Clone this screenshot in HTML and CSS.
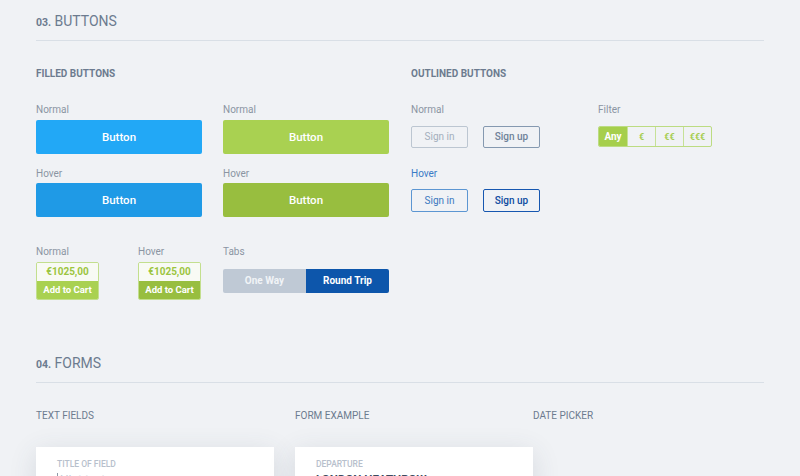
FILE: index.html
```html
<!DOCTYPE html>
<html lang="en">
<head>
  <meta charset="UTF-8" />
  <meta name="viewport" content="width=device-width, initial-scale=1.0"/>
  <title>UI Kit - Buttons &amp; Forms</title>
  <link rel="stylesheet" href="styles.css">
</head>
<body>
  <section class="section">
    <h2 class="section-title"><span class="section-num">03.</span> BUTTONS</h2>

    <div class="button-groups">
      <div class="group group-filled">
        <h3 class="group-title">Filled buttons</h3>
        <div class="demo-grid">
          <div class="demo">
            <span class="demo-label">Normal</span>
            <div class="demo-body"><button class="btn btn-blue">Button</button></div>
          </div>
          <div class="demo">
            <span class="demo-label">Normal</span>
            <div class="demo-body"><button class="btn btn-green">Button</button></div>
          </div>
          <div class="demo">
            <span class="demo-label">Hover</span>
            <div class="demo-body"><button class="btn btn-blue is-hover">Button</button></div>
          </div>
          <div class="demo">
            <span class="demo-label">Hover</span>
            <div class="demo-body"><button class="btn btn-green is-hover">Button</button></div>
          </div>

          <div class="demo-pair demo-last">
            <div class="demo">
              <span class="demo-label">Normal</span>
              <div class="demo-body tall">
                <div class="cart">
                  <span class="cart-price">€1025,00</span>
                  <button class="cart-btn">Add to Cart</button>
                </div>
              </div>
            </div>
            <div class="demo">
              <span class="demo-label">Hover</span>
              <div class="demo-body tall">
                <div class="cart is-hover">
                  <span class="cart-price">€1025,00</span>
                  <button class="cart-btn">Add to Cart</button>
                </div>
              </div>
            </div>
          </div>
          <div class="demo demo-last">
            <span class="demo-label">Tabs</span>
            <div class="demo-body tall">
              <div class="tabs">
                <button class="tab">One Way</button>
                <button class="tab active">Round Trip</button>
              </div>
            </div>
          </div>
        </div>
      </div>

      <div class="group group-outlined">
        <h3 class="group-title">Outlined buttons</h3>
        <div class="demo-grid">
          <div class="demo">
            <span class="demo-label">Normal</span>
            <div class="demo-body">
              <button class="btn-line">Sign in</button>
              <button class="btn-line strong">Sign up</button>
            </div>
          </div>
          <div class="demo">
            <span class="demo-label">Filter</span>
            <div class="demo-body">
              <div class="filter">
                <button class="filter-opt active">Any</button>
                <button class="filter-opt">€</button>
                <button class="filter-opt">€€</button>
                <button class="filter-opt">€€€</button>
              </div>
            </div>
          </div>
          <div class="demo">
            <span class="demo-label hover-label">Hover</span>
            <div class="demo-body">
              <button class="btn-line is-hover">Sign in</button>
              <button class="btn-line strong is-hover">Sign up</button>
            </div>
          </div>
        </div>
      </div>
    </div>
  </section>

  <section class="section section-forms">
    <h2 class="section-title"><span class="section-num">04.</span> FORMS</h2>

    <div class="form-cols">
      <div class="form-col">
        <h3 class="col-title">Text fields</h3>
        <div class="card">
          <span class="field-label">Title of field</span>
          <div class="field-input"><span class="caret"></span>Hint text</div>
        </div>
      </div>
      <div class="form-col">
        <h3 class="col-title">Form example</h3>
        <div class="card">
          <span class="field-label">Departure</span>
          <div class="field-value">LONDON HEATHROW</div>
        </div>
      </div>
      <div class="form-col">
        <h3 class="col-title">Date picker</h3>
      </div>
    </div>
  </section>
</body>
</html>
```

FILE: styles.css
```css
:root {
  --page-bg: #f0f2f5;
  --title: #6c7b8f;
  --label: #8b95a3;
  --rule: #d9dfe6;
  --blue: #22a8f6;
  --blue-hover: #1f9ae6;
  --green: #a9d151;
  --green-hover: #98be3f;
  --navy: #0d56ab;
}

* {
  margin: 0;
  padding: 0;
  box-sizing: border-box;
  font-family: 'Roboto', 'Liberation Sans', sans-serif;
}

html, body {
  overflow: hidden;
}

body {
  background-color: var(--page-bg);
  color: var(--title);
  padding: 0 36px;
  width: 800px;
  height: 476px;
}

button {
  border: none;
  background: none;
  cursor: pointer;
  font-family: inherit;
}

/* section headings */
.section {
  padding-top: 11px;
}

.section-title {
  font-size: 14px;
  font-weight: 400;
  line-height: 20px;
  color: var(--title);
  padding-bottom: 7px;
  border-bottom: 1px solid var(--rule);
}

.section-num {
  font-size: 10.5px;
  font-weight: 700;
}

.section-forms {
  margin-top: 42px;
}

/* button groups */
.button-groups {
  display: flex;
  gap: 22px;
}

.group-filled {
  width: 353px;
}

.group-title {
  margin-top: 26px;
  font-size: 10px;
  line-height: 14px;
  font-weight: 700;
  text-transform: uppercase;
  color: var(--title);
}

.demo-grid {
  display: grid;
  grid-template-columns: 166px 166px;
  column-gap: 21px;
  row-gap: 13px;
  margin-top: 22px;
}

.demo-label {
  display: block;
  font-size: 10px;
  line-height: 14px;
  color: var(--label);
  margin-bottom: 2.5px;
}

.hover-label {
  color: #3a7bc6;
}

.demo-body {
  height: 34px;
  display: flex;
  align-items: center;
  gap: 15px;
}

.demo-body.tall {
  height: 38px;
}

.demo-last {
  margin-top: 15px;
}

.demo-pair {
  display: flex;
  gap: 39px;
}

/* filled buttons */
.btn {
  width: 100%;
  height: 34px;
  border-radius: 2px;
  color: #fff;
  font-size: 11.5px;
  font-weight: 500;
}

.btn-blue { background: var(--blue); }
.btn-blue.is-hover { background: var(--blue-hover); }
.btn-green { background: var(--green); }
.btn-green.is-hover { background: var(--green-hover); }

/* add to cart */
.cart {
  width: 63px;
  height: 38px;
  display: flex;
  flex-direction: column;
  border: 1px solid #c3df8e;
  border-radius: 2px;
  overflow: hidden;
}

.cart-price {
  flex: 1;
  background: #f8faf4;
  color: #9cc540;
  font-size: 10px;
  font-weight: 700;
  line-height: 18px;
  text-align: center;
}

.cart-btn {
  height: 19px;
  background: var(--green);
  color: #fff;
  font-size: 9.5px;
  font-weight: 700;
}

.cart.is-hover .cart-btn {
  background: var(--green-hover);
}

/* tabs */
.tabs {
  display: flex;
  width: 166px;
  height: 24px;
  border-radius: 2px;
  overflow: hidden;
}

.tab {
  flex: 1;
  background: #bfc9d5;
  color: #f1f4f7;
  font-size: 10px;
  font-weight: 700;
}

.tab.active {
  background: var(--navy);
  color: #fff;
}

/* outlined buttons */
.btn-line {
  width: 57px;
  height: 22px;
  border: 1px solid #bcc6d1;
  border-radius: 2px;
  color: #a3aebc;
  font-size: 10px;
}

.btn-line.strong {
  border-color: #8599b0;
  color: #6f8299;
  font-weight: 500;
}

.btn-line.is-hover {
  height: 23px;
  border-color: #5c96d2;
  color: #3a78bf;
}

.btn-line.strong.is-hover {
  border: 1.5px solid #1657b0;
  color: #0d4ba0;
}

/* price filter */
.filter {
  display: flex;
  height: 21px;
  border: 1px solid #bcdc82;
  border-radius: 2px;
  overflow: hidden;
}

.filter-opt {
  width: 28px;
  color: #a6cd50;
  font-size: 9px;
  font-weight: 700;
  border-left: 1px solid #c6e197;
}

.filter-opt:first-child {
  border-left: none;
}

.filter-opt.active {
  background: #a6cf4c;
  color: #fff;
  font-size: 10px;
}

/* forms */
.form-cols {
  display: grid;
  grid-template-columns: 259px 238px 1fr;
}

.col-title {
  margin-top: 26px;
  font-size: 10px;
  line-height: 14px;
  font-weight: 400;
  text-transform: uppercase;
  color: var(--title);
}

.card {
  width: 238px;
  height: 140px;
  margin-top: 24px;
  padding: 12px 21px;
  background: #fff;
  box-shadow: 0 6px 26px rgba(60, 72, 92, 0.14);
}

.field-label {
  display: block;
  font-size: 8.5px;
  line-height: 11px;
  font-weight: 500;
  text-transform: uppercase;
  color: #b7c0cc;
  margin-bottom: 2px;
}

.field-input {
  display: flex;
  align-items: center;
  font-size: 12px;
  line-height: 16px;
  color: #c3cad4;
}

.caret {
  width: 1px;
  height: 14px;
  margin-right: 2px;
  background: #8e99a8;
}

.field-value {
  font-size: 11.5px;
  line-height: 15px;
  font-weight: 700;
  color: #3b4a5e;
}
```
